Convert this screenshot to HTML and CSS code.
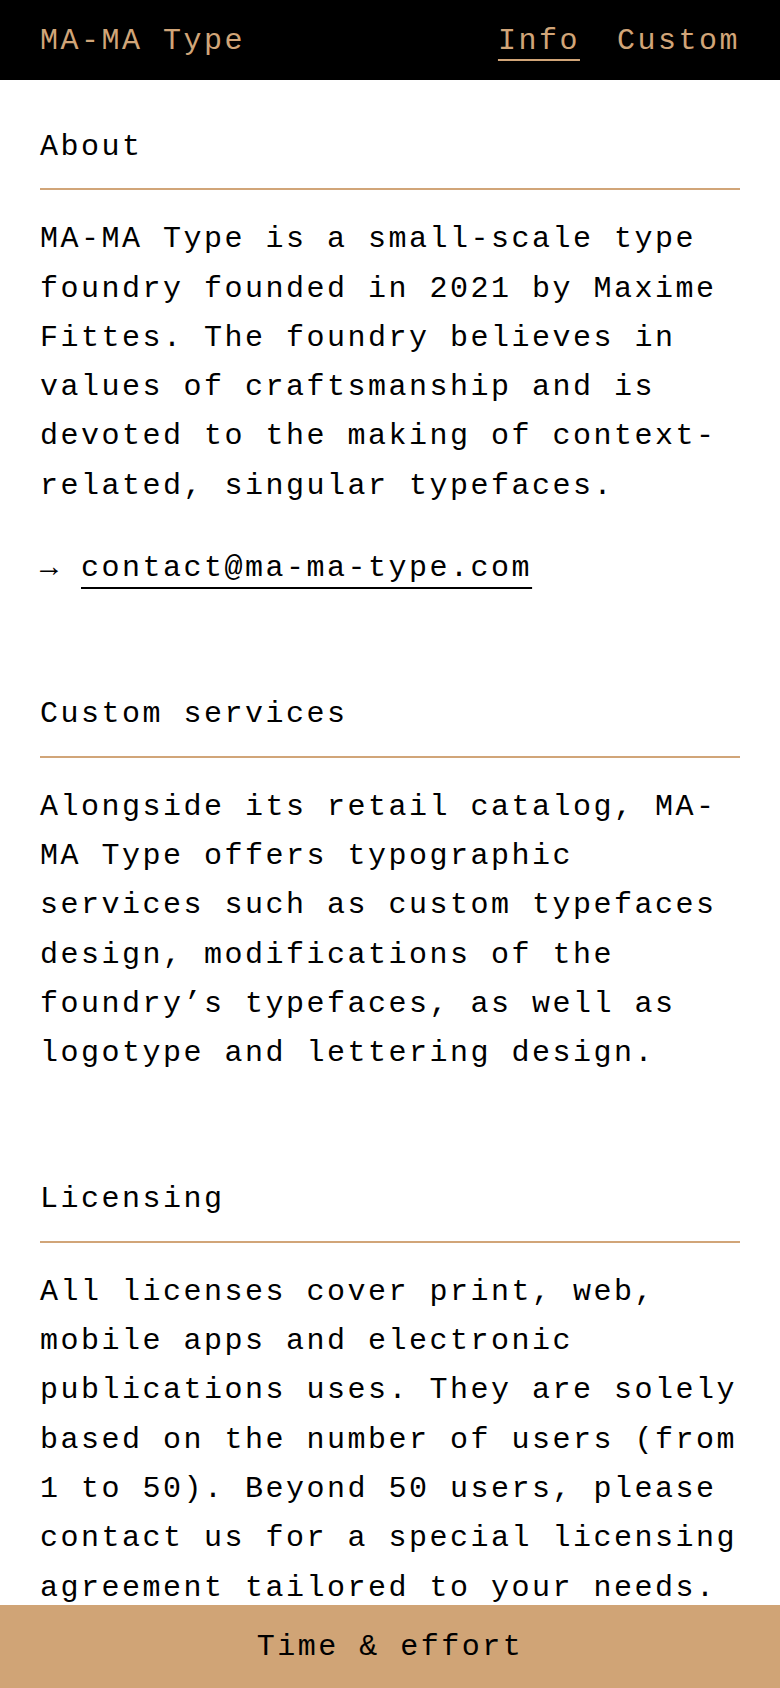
FILE: index.html
```html
<!DOCTYPE html>
<html lang="en">
<head>
<meta charset="utf-8">
<title>Info — MA-MA Type</title>
<link rel="stylesheet" href="styles.css">
</head>
<body>
<header class="site-header">
  <a class="logo" href="#">MA-MA Type</a>
  <nav class="nav">
    <a class="nav-link active" href="#">Info</a>
    <a class="nav-link" href="#">Custom</a>
  </nav>
</header>
<main class="content">
  <section class="section">
    <h2 class="section-title">About</h2>
    <p class="text">MA-MA Type is a small-scale type foundry founded in 2021 by Maxime Fittes. The foundry believes in values of craftsmanship and is devoted to the making of context-related, singular typefaces.</p>
    <p class="text contact">→ <a class="mail" href="#">contact@ma-ma-type.com</a></p>
  </section>
  <section class="section">
    <h2 class="section-title">Custom services</h2>
    <p class="text">Alongside its retail catalog, MA-MA Type offers typographic services such as custom typefaces design, modifications of the foundry’s typefaces, as well as logotype and lettering design.</p>
  </section>
  <section class="section">
    <h2 class="section-title">Licensing</h2>
    <p class="text">All licenses cover print, web, mobile apps and electronic publications uses. They are solely based on the number of users (from 1 to 50). Beyond 50 users, please contact us for a special licensing agreement tailored to your needs.</p>
  </section>
</main>
<footer class="bottom-bar">Time &amp; effort</footer>
</body>
</html>
```
FILE: styles.css
```css
* {
  box-sizing: border-box;
}

html, body {
  margin: 0;
  padding: 0;
  background: #ffffff;
}

body {
  font-family: "Liberation Mono", "DejaVu Sans Mono", monospace;
  font-size: 30px;
  letter-spacing: 2.5px;
  line-height: 49.3px;
  color: #000000;
  padding-bottom: 120px;
}

a {
  color: inherit;
  text-decoration: none;
}

.site-header {
  height: 80px;
  background: #000000;
  color: #d1a578;
  display: flex;
  align-items: center;
  justify-content: space-between;
  padding: 4px 40px 0;
}

.nav {
  display: flex;
  gap: 37px;
}

.nav-link.active {
  text-decoration: underline;
  text-decoration-thickness: 2px;
  text-underline-offset: 10px;
}

.content {
  padding: 43px 40px 0;
}

.section {
  margin-bottom: 97px;
}

.section-title {
  margin: 0;
  font-size: inherit;
  font-weight: normal;
  padding-bottom: 16px;
  border-bottom: 2px solid #d1a578;
}

.text {
  margin: 25px 0 0;
}

.contact {
  margin-top: 33px;
}

.mail {
  text-decoration: underline;
  text-decoration-thickness: 2px;
  text-underline-offset: 11px;
}

.bottom-bar {
  position: fixed;
  left: 0;
  right: 0;
  bottom: 0;
  height: 83px;
  padding-top: 2px;
  background: #d0a476;
  color: #000000;
  display: flex;
  align-items: center;
  justify-content: center;
}
```
